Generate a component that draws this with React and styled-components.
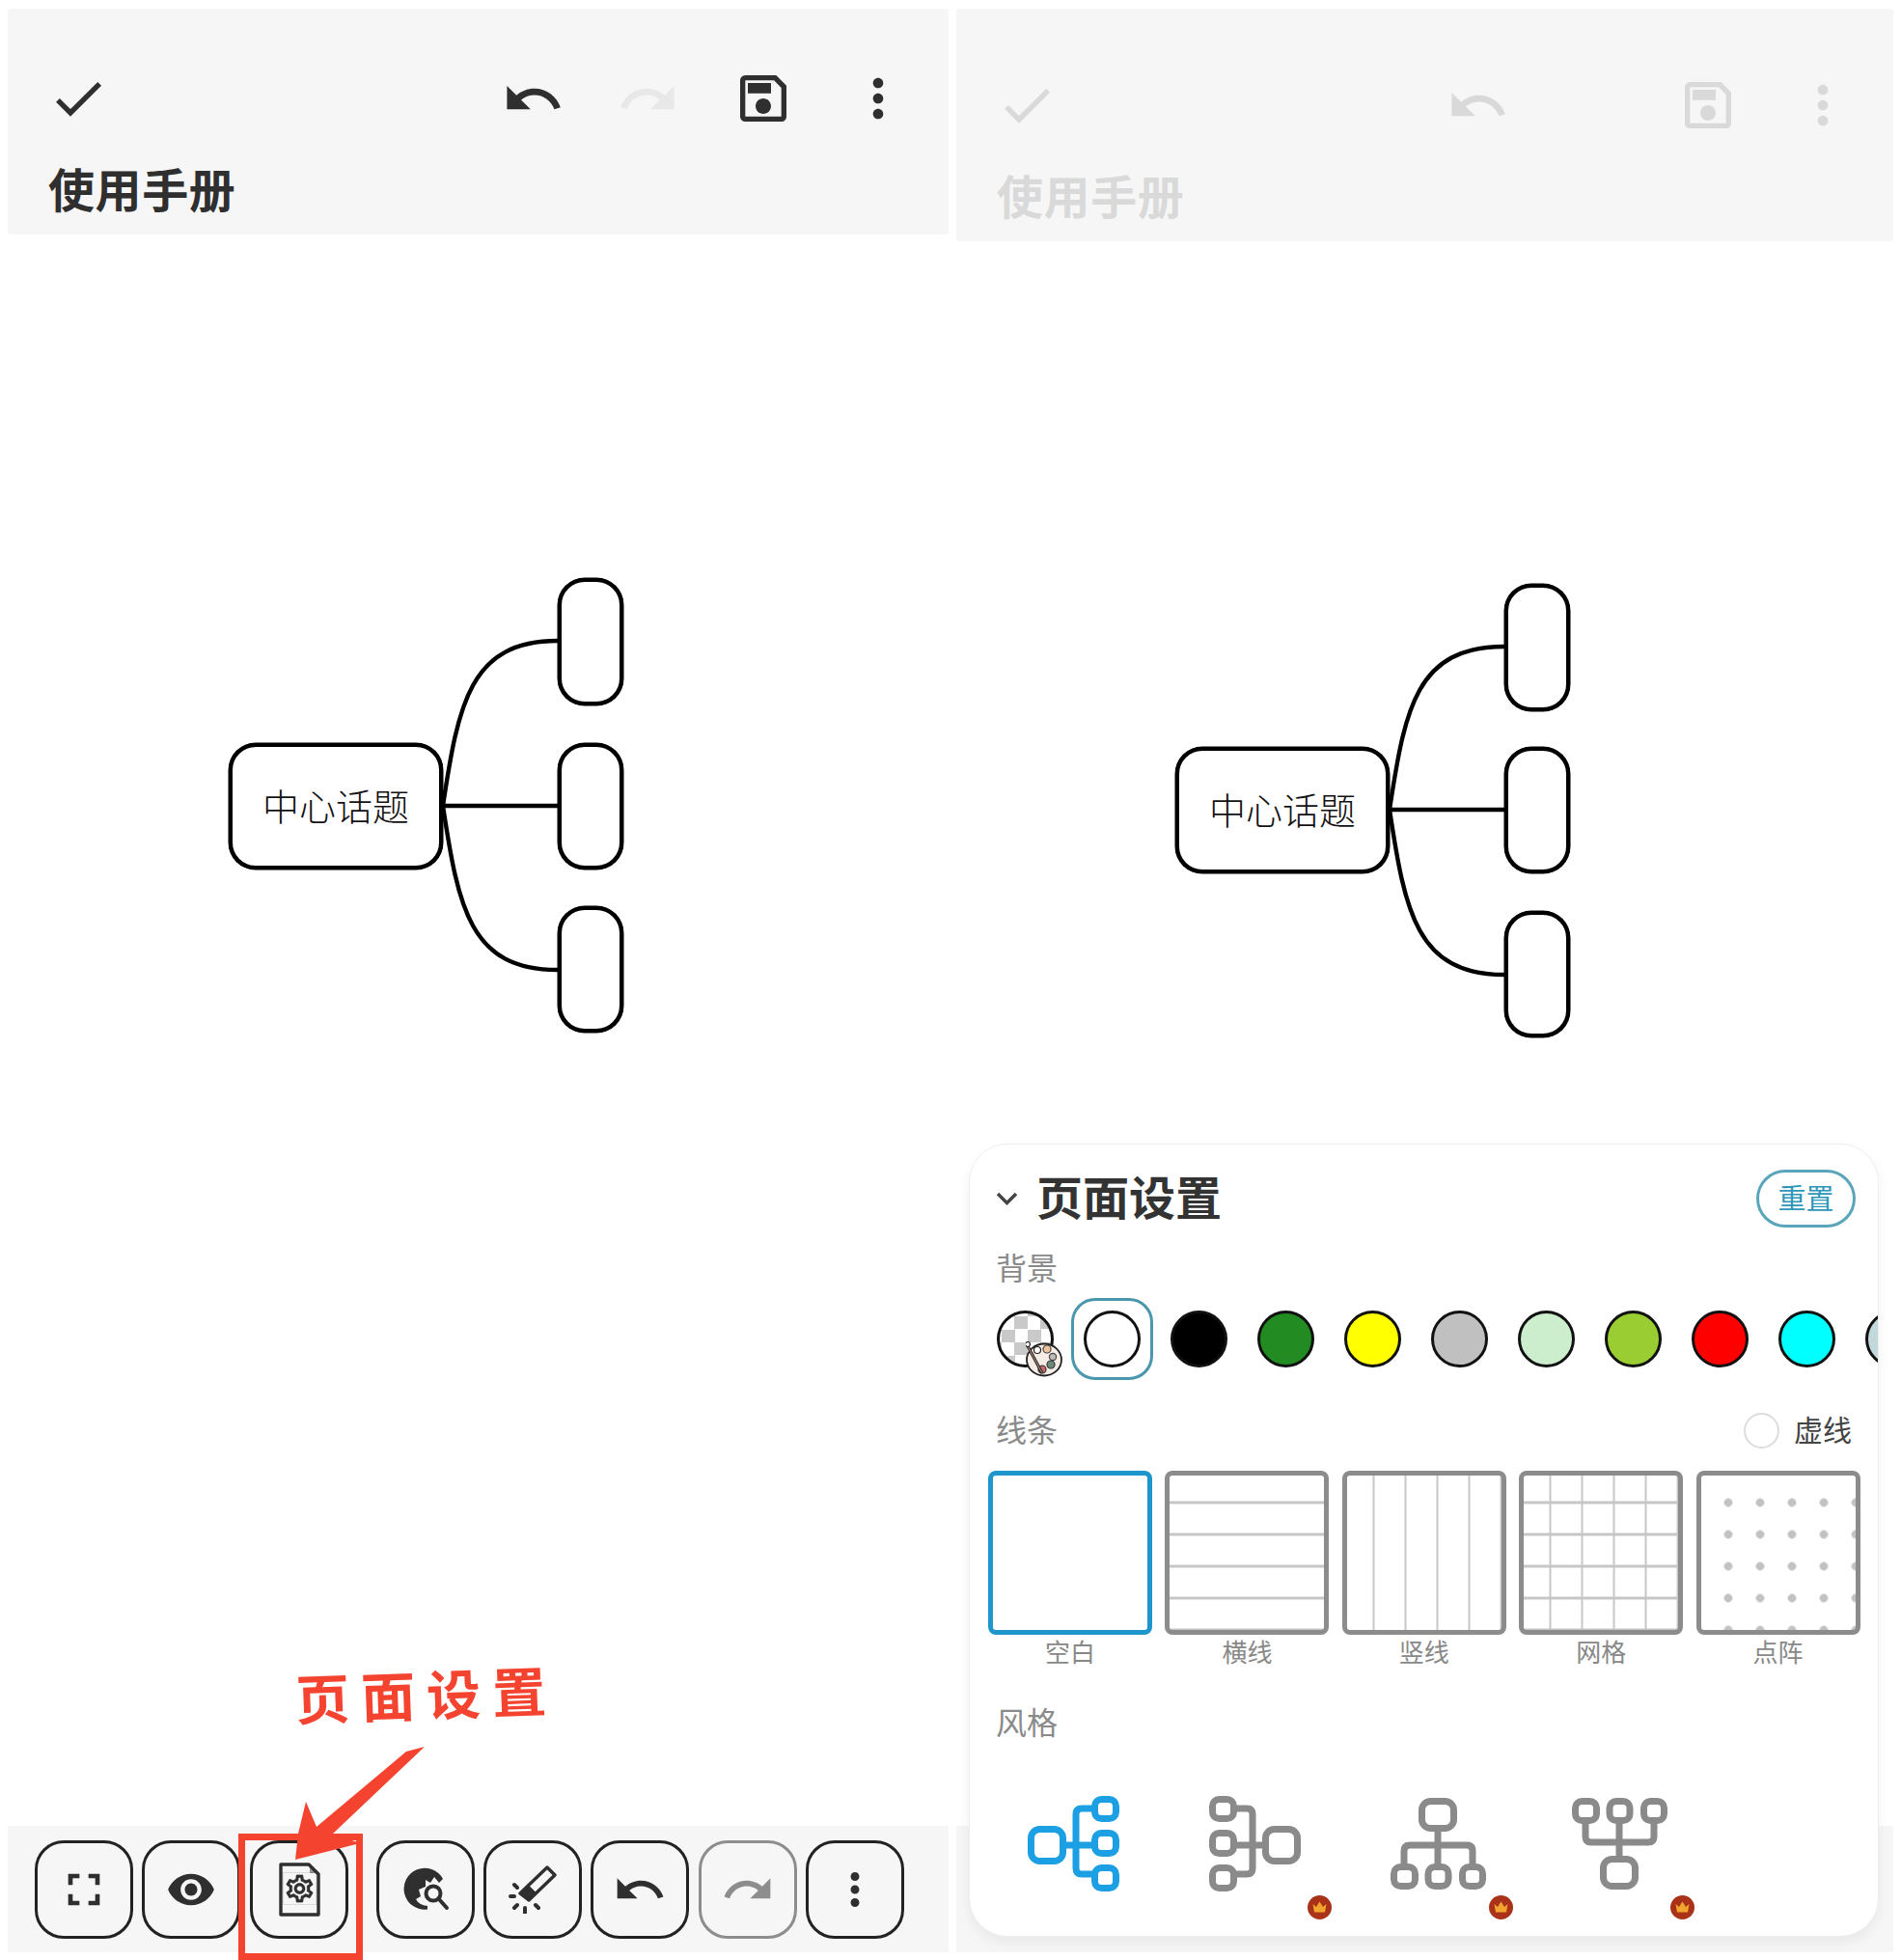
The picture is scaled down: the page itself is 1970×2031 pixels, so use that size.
import styled, { createGlobalStyle } from "styled-components";
import {
	MdCheck,
	MdUndo,
	MdRedo,
	MdOutlineSave,
	MdMoreVert,
	MdFullscreen,
	MdVisibility,
	MdOutlineSettings,
} from "react-icons/md";

const GlobalStyle = createGlobalStyle`
	* {
		box-sizing: border-box;
	}
	html, body {
		margin: 0;
		padding: 0;
		background: #fff;
		overflow: hidden;
		font-family: "Noto Sans CJK SC", "Noto Sans", sans-serif;
	}
`;

const Page = styled.div`
	width: 1970px;
	height: 2031px;
	padding: 9px 8px 8px;
	display: flex;
	gap: 8px;
`;

const Phone = styled.div`
	position: relative;
	width: ${(props) => props.$width}px;
	display: flex;
	flex-direction: column;
`;

const Header = styled.header`
	height: ${(props) => props.$height}px;
	padding: ${(props) => props.$top}px 14px 0 0;
	background: #f6f6f6;
	border-radius: 3px;
	color: #2f2f2f;
`;

const HeaderBody = styled.div`
	opacity: ${(props) => (props.$faded ? 0.14 : 1)};
`;

const ActionRow = styled.div`
	height: 50px;
	display: flex;
	align-items: center;
`;

const CheckSlot = styled.div`
	display: flex;
	margin-left: 41px;
	margin-right: auto;
`;

const ActionSlot = styled.div`
	width: 119px;
	display: flex;
	justify-content: center;
	color: ${(props) => (props.$off ? "#e8e8e8" : "#2f2f2f")};
	visibility: ${(props) => (props.$hidden ? "hidden" : "visible")};
`;

const DocTitle = styled.h1`
	margin: 43px 0 0 42px;
	font-size: 48px;
	line-height: 48px;
	font-weight: 700;
	letter-spacing: 0.6px;
`;

const Canvas = styled.main`
	position: relative;
	flex: 1;
`;

const Diagram = styled.div`
	position: absolute;
	left: ${(props) => props.$x}px;
	top: ${(props) => props.$y}px;
	width: 415px;
	height: 475px;
`;

const Links = styled.svg`
	position: absolute;
	inset: 0;
	width: 100%;
	height: 100%;
`;

const Node = styled.div`
	position: absolute;
	left: ${(props) => props.$x}px;
	top: ${(props) => props.$y}px;
	width: ${(props) => props.$w}px;
	height: ${(props) => props.$h}px;
	padding-bottom: 5px;
	border: 4px solid #000;
	border-radius: 28px;
	box-shadow: 0 0 0 0.5px #000;
	background: #fff;
	display: flex;
	align-items: center;
	justify-content: center;
	font-size: 38px;
	font-weight: 300;
	color: #111;
`;

const Toolbar = styled.footer`
	height: 131px;
	padding: 15px 0 0 28px;
	background: #f6f6f6;
	display: flex;
	gap: 9.3px;
`;

const ToolButton = styled.div`
	width: 102px;
	height: 102px;
	margin-left: ${(props) => (props.$split ? 20 : 0)}px;
	border: 3px solid ${(props) => (props.$off ? "#8d8d8d" : "#222")};
	border-radius: 30px;
	display: flex;
	align-items: center;
	justify-content: center;
	color: ${(props) => (props.$off ? "#8d8d8d" : "#2f2f2f")};
`;

const Callout = styled.div`
	position: absolute;
	left: 298px;
	top: 1713px;
	font-size: 56px;
	line-height: 64px;
	font-weight: 700;
	letter-spacing: 12px;
	color: #f4432f;
	white-space: nowrap;
	transform: rotate(-2deg);
`;

const Highlight = styled.div`
	position: absolute;
	left: 239px;
	top: 1891px;
	width: 129px;
	height: 131px;
	border: 7px solid #f4432f;
`;

const Arrow = styled.svg`
	position: absolute;
	left: 292px;
	top: 1796px;
	width: 145px;
	height: 125px;
`;

const Sheet = styled.section`
	position: absolute;
	left: 13px;
	top: 1176px;
	width: 943px;
	height: 822px;
	background: #fff;
	border: 1px solid #eee;
	border-radius: 40px;
	box-shadow: 0 6px 14px rgba(0, 0, 0, 0.06);
	overflow: hidden;
	padding-top: 26px;
`;

const SheetHead = styled.div`
	height: 60px;
	padding: 0 23px 0 27px;
	display: flex;
	align-items: center;
`;

const SheetTitle = styled.h2`
	margin: 0 auto 8px 19px;
	font-size: 48px;
	line-height: 48px;
	font-weight: 700;
	color: #333;
`;

const ResetButton = styled.div`
	width: 103px;
	height: 60px;
	padding-bottom: 4px;
	border: 3px solid #5aa5ba;
	border-radius: 30px;
	display: flex;
	align-items: center;
	justify-content: center;
	font-size: 29px;
	color: #2e96b8;
`;

const SectionLabel = styled.div`
	margin: ${(props) => props.$top}px 0 0 27px;
	font-size: 32px;
	line-height: 32px;
	color: #8a8a8a;
`;

const SwatchRow = styled.div`
	margin: 17px 0 0 15px;
	display: flex;
	gap: 5px;
`;

const SwatchCell = styled.div`
	flex: none;
	width: 85px;
	height: 85px;
	border: 3px solid ${(props) => (props.$selected ? "#4a96ad" : "transparent")};
	border-radius: 25px;
	display: flex;
	align-items: center;
	justify-content: center;
`;

const Swatch = styled.div`
	position: relative;
	width: 59px;
	height: 59px;
	border: 3.5px solid #111;
	border-radius: 50%;
	background: ${(props) => props.$color};
`;

const CheckerSwatch = styled(Swatch)`
	background: repeating-conic-gradient(#c9c9c9 0 25%, #fff 0 50%) 2px 3px / 27px 27px;
`;

const Palette = styled.svg`
	position: absolute;
	left: 27px;
	top: 29px;
	width: 38px;
	height: 37px;
`;

const LineHead = styled.div`
	margin-top: 34px;
	height: 37px;
	padding: 0 27px 0 27px;
	display: flex;
	align-items: center;
`;

const LineLabel = styled.div`
	margin: 0 auto 5px 0;
	font-size: 32px;
	line-height: 32px;
	color: #8a8a8a;
`;

const Radio = styled.div`
	width: 37px;
	height: 37px;
	border: 2.5px solid #ddd;
	border-radius: 50%;
`;

const DashLabel = styled.div`
	margin: 0 0 5px 15px;
	font-size: 30px;
	line-height: 32px;
	color: #444;
`;

const ThumbRow = styled.div`
	margin: 23px 0 0 19px;
	display: flex;
	gap: 13.4px;
`;

const ThumbItem = styled.div`
	width: 170px;
`;

const Thumb = styled.div`
	height: 170px;
	border: 5px solid ${(props) => (props.$selected ? "#1e96cc" : "#8c8c8c")};
	border-radius: 8px;
	background-color: #fff;
	background-image: ${(props) => {
		const h = "linear-gradient(#c6c6c6 3px, transparent 3px)";
		const v = "linear-gradient(90deg, #c6c6c6 2.5px, transparent 2.5px)";
		const d = "radial-gradient(circle, #c2c2c2 4px, transparent 4.6px)";
		if (props.$kind === "h") return h;
		if (props.$kind === "v") return v;
		if (props.$kind === "grid") return `${h}, ${v}`;
		if (props.$kind === "dots") return d;
		return "none";
	}};
	background-size: ${(props) => (props.$kind === "grid" ? "100% 33px, 33px 100%" : props.$kind === "dots" ? "33px 33px" : props.$kind === "h" ? "100% 33px" : "33px 100%")};
	background-position: ${(props) => (props.$kind === "grid" ? "0 26.5px, 26.5px 0" : props.$kind === "dots" ? "11.5px 11.5px" : props.$kind === "h" ? "0 26.5px" : "26.5px 0")};
`;

const ThumbCaption = styled.div`
	margin-top: 1px;
	font-size: 26px;
	line-height: 31px;
	text-align: center;
	color: #888;
`;

const StyleRow = styled.div`
	margin: 62px 0 0 60px;
	display: flex;
	gap: 89px;
`;

const StyleCell = styled.div`
	position: relative;
	width: 99px;
	height: 100px;
	color: ${(props) => (props.$active ? "#1d9fe4" : "#8a8a8a")};
`;

const Crown = styled.svg`
	position: absolute;
	left: 102px;
	top: 103px;
	width: 25px;
	height: 25px;
`;

const swatches = ["#000", "#228b22", "#ffff00", "#c0c0c0", "#cceecc", "#9acd32", "#ff0000", "#00ffff", "#c2d8da"];

const thumbs = [
	{ kind: "none", label: "空白" },
	{ kind: "h", label: "横线" },
	{ kind: "v", label: "竖线" },
	{ kind: "grid", label: "网格" },
	{ kind: "dots", label: "点阵" },
];

function MindMap({ x, y, mid, low }) {
	const fork = mid + 65;
	return (
		<Diagram $x={x} $y={y}>
			<Links viewBox="0 0 415 475" fill="none" stroke="#000" strokeWidth="4.4">
				<path d={`M222 ${fork} H341`} />
				<path d={`M222 ${fork} C238 ${fork - 106} 250 65 341 65`} />
				<path d={`M222 ${fork} C238 ${fork + 106} 250 ${low + 66} 341 ${low + 66}`} />
			</Links>
			<Node $x={0} $y={mid} $w={222} $h={131}>
				中心话题
			</Node>
			<Node $x={341} $y={0} $w={68} $h={132} />
			<Node $x={341} $y={mid} $w={68} $h={131} />
			<Node $x={341} $y={low} $w={68} $h={131} />
		</Diagram>
	);
}

function TopBar({ height, top, faded }) {
	return (
		<Header $height={height} $top={top}>
			<HeaderBody $faded={faded}>
				<ActionRow>
					<CheckSlot>
						<MdCheck size={64} />
					</CheckSlot>
					<ActionSlot>
						<MdUndo size={65} />
					</ActionSlot>
					<ActionSlot $off $hidden={faded}>
						<MdRedo size={65} />
					</ActionSlot>
					<ActionSlot>
						<MdOutlineSave size={64} />
					</ActionSlot>
					<ActionSlot>
						<MdMoreVert size={64} />
					</ActionSlot>
				</ActionRow>
				<DocTitle>使用手册</DocTitle>
			</HeaderBody>
		</Header>
	);
}

function PageSettingsIcon() {
	return (
		<svg width="46" height="58" viewBox="0 0 46 58" fill="none">
			<path d="M4 3 H33 L43 13 V55 H4 Z" stroke="currentColor" strokeWidth="3.4" strokeLinejoin="round" />
			<path d="M34 5 V12 H41 Z" fill="currentColor" opacity="0.5" />
			<MdOutlineSettings x="6.5" y="11" size={34} color="currentColor" stroke="currentColor" strokeWidth="0.2" />
		</svg>
	);
}

function GlobeSearchIcon() {
	return (
		<svg width="50" height="50" viewBox="0 0 50 50">
			<path
				d="M27 45.5 A21.5 21.5 0 1 1 43 14 L39 18 L34 12 L30 18 L25 15 L25 22 L18 25 L20 32 L15 35 Q18 41 27 42 Z"
				fill="currentColor"
			/>
			<circle cx="33" cy="29" r="7.5" fill="none" stroke="currentColor" strokeWidth="4" />
			<path d="M38.5 34.5 L47 44" stroke="currentColor" strokeWidth="4" strokeLinecap="round" />
		</svg>
	);
}

function BrushIcon() {
	return (
		<svg width="50" height="50" viewBox="0 0 50 50" fill="none" stroke="currentColor">
			<path d="M12 29 L40 2 L48 10 L21 36 Z" strokeWidth="3.4" strokeLinejoin="round" />
			<path d="M12 29 L20 21 L28 29 L21 36 Z" fill="currentColor" strokeWidth="2" />
			<path d="M2 32 H6 M6 20 L9 23 M6 44 L9 41 M17 44 V49 M28 41 L31 44" strokeWidth="4" strokeLinecap="round" />
		</svg>
	);
}

function Bottom() {
	return (
		<Toolbar>
			<ToolButton>
				<MdFullscreen size={56} />
			</ToolButton>
			<ToolButton>
				<MdVisibility size={52} />
			</ToolButton>
			<ToolButton>
				<PageSettingsIcon />
			</ToolButton>
			<ToolButton $split>
				<GlobeSearchIcon />
			</ToolButton>
			<ToolButton>
				<BrushIcon />
			</ToolButton>
			<ToolButton>
				<MdUndo size={56} />
			</ToolButton>
			<ToolButton $off>
				<MdRedo size={56} />
			</ToolButton>
			<ToolButton>
				<MdMoreVert size={54} />
			</ToolButton>
		</Toolbar>
	);
}

function TreeSide() {
	return (
		<>
			<rect x="3.5" y="34.5" width="33" height="33" rx="9" />
			<rect x="69.5" y="3.5" width="22" height="20" rx="7" />
			<rect x="69.5" y="38.5" width="22" height="21" rx="7" />
			<rect x="69.5" y="74.5" width="22" height="21" rx="7" />
			<path d="M37 51 H69" />
			<path d="M69 13 H56 Q50 13 50 19 V75 Q50 81 56 81 H69" />
		</>
	);
}

function TreeStack() {
	return (
		<>
			<rect x="32.5" y="3.5" width="33" height="28" rx="9" />
			<rect x="3.5" y="71.5" width="22" height="20" rx="7" />
			<rect x="39" y="71.5" width="21" height="20" rx="7" />
			<rect x="74.5" y="71.5" width="21" height="20" rx="7" />
			<path d="M49 32 V71" />
			<path d="M14 71 V55 Q14 49 20 49 H79 Q85 49 85 55 V71" />
		</>
	);
}

function StyleIcon({ transform, children }) {
	return (
		<svg width="99" height="100" viewBox="0 0 99 100" fill="none" stroke="currentColor" strokeWidth="7">
			<g transform={transform}>{children}</g>
		</svg>
	);
}

function CrownBadge() {
	return (
		<Crown viewBox="0 0 25 25">
			<circle cx="12.5" cy="12.5" r="12.5" fill="#a93219" />
			<path d="M5.5 9 L9 12 L12.5 6.5 L16 12 L19.5 9 L18 17.5 H7 Z" fill="#f2a52e" />
		</Crown>
	);
}

function SettingsSheet() {
	return (
		<Sheet>
			<SheetHead>
				<svg width="23" height="14" viewBox="0 0 23 14" fill="none" stroke="#444" strokeWidth="3.4">
					<polyline points="2,2 11.5,11.5 21,2" />
				</svg>
				<SheetTitle>页面设置</SheetTitle>
				<ResetButton>重置</ResetButton>
			</SheetHead>
			<SectionLabel $top={24}>背景</SectionLabel>
			<SwatchRow>
				<SwatchCell>
					<CheckerSwatch>
						<Palette viewBox="0 0 38 37">
							<ellipse cx="19" cy="19" rx="18" ry="16.5" fill="#f6ece6" stroke="#222" strokeWidth="1.8" />
							<circle cx="12" cy="9" r="3.5" fill="#fff" stroke="#222" strokeWidth="1.2" />
							<circle cx="22" cy="8" r="4" fill="#eec39c" stroke="#444" strokeWidth="1.2" />
							<circle cx="28" cy="16" r="3.6" fill="#bcbcbc" stroke="#444" strokeWidth="1.2" />
							<circle cx="26" cy="24" r="4" fill="#6d8a78" stroke="#333" strokeWidth="1.2" />
							<circle cx="17" cy="29" r="4" fill="#c76a6e" stroke="#333" strokeWidth="1.2" />
							<path d="M1 3 L17 33" stroke="#222" strokeWidth="3" />
							<path d="M1.6 4.2 L16.8 32.6" stroke="#c89a84" strokeWidth="1" />
							<circle cx="2" cy="3" r="2.5" fill="#fff" stroke="#222" strokeWidth="1.2" />
						</Palette>
					</CheckerSwatch>
				</SwatchCell>
				<SwatchCell $selected>
					<Swatch $color="#fff" />
				</SwatchCell>
				{swatches.map((color) => (
					<SwatchCell key={color}>
						<Swatch $color={color} />
					</SwatchCell>
				))}
			</SwatchRow>
			<LineHead>
				<LineLabel>线条</LineLabel>
				<Radio />
				<DashLabel>虚线</DashLabel>
			</LineHead>
			<ThumbRow>
				{thumbs.map((thumb, i) => (
					<ThumbItem key={thumb.kind}>
						<Thumb $kind={thumb.kind} $selected={i === 0} />
						<ThumbCaption>{thumb.label}</ThumbCaption>
					</ThumbItem>
				))}
			</ThumbRow>
			<SectionLabel $top={41}>风格</SectionLabel>
			<StyleRow>
				<StyleCell $active>
					<StyleIcon>
						<TreeSide />
					</StyleIcon>
				</StyleCell>
				<StyleCell>
					<StyleIcon transform="translate(95 0) scale(-1 1)">
						<TreeSide />
					</StyleIcon>
					<CrownBadge />
				</StyleCell>
				<StyleCell>
					<StyleIcon transform="translate(0 2)">
						<TreeStack />
					</StyleIcon>
					<CrownBadge />
				</StyleCell>
				<StyleCell>
					<StyleIcon transform="translate(0 97) scale(1 -1)">
						<TreeStack />
					</StyleIcon>
					<CrownBadge />
				</StyleCell>
			</StyleRow>
		</Sheet>
	);
}

function App() {
	return (
		<>
			<GlobalStyle />
			<Page>
				<Phone $width={975}>
					<TopBar height={234} top={68} />
					<Canvas>
						<MindMap x={229} y={356} mid={171} low={340} />
					</Canvas>
					<Bottom />
					<Callout>页面设置</Callout>
					<Highlight />
					<Arrow viewBox="0 0 145 125">
						<polygon points="6,122 9,95 17,62 28,88 121,10 140,5 45,95 73,105" fill="#f4432f" />
					</Arrow>
				</Phone>
				<Phone $width={971}>
					<TopBar height={241} top={75} faded />
					<Canvas>
						<MindMap x={227} y={355} mid={169} low={339} />
					</Canvas>
					<Toolbar />
					<SettingsSheet />
				</Phone>
			</Page>
		</>
	);
}

export default App;
